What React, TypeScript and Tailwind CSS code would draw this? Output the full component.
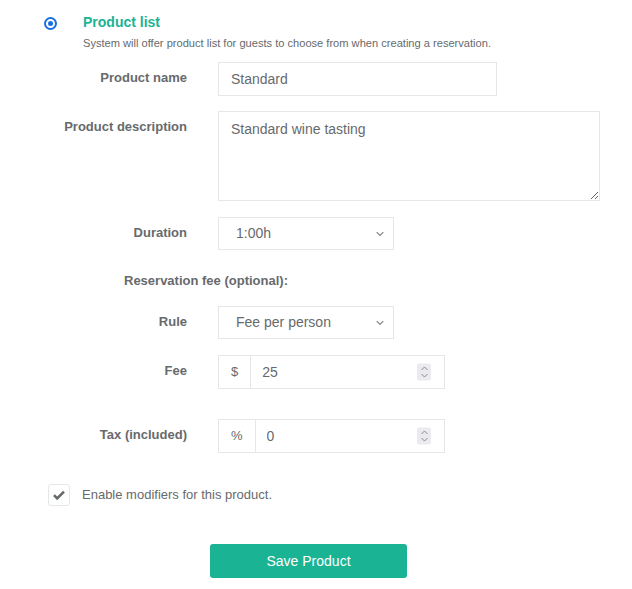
import React from 'react';

const labelCls = "w-[187px] shrink-0 text-right text-[13px] font-bold leading-4 pt-[8px] text-[#676a6c]";
const boxCls = "border border-[#e5e6e7] bg-white text-[14px] text-[#676a6c] outline-none";

function Chevron() {
    return (
        <svg width="8" height="5" viewBox="0 0 8 5" className="pointer-events-none absolute right-[10px] top-1/2 -translate-y-1/2">
            <path d="M0.7 0.7l3.3 3.3 3.3-3.3" fill="none" stroke="#808080" strokeWidth="1.2" />
        </svg>
    );
}

function Spinner() {
    return (
        <div className="pointer-events-none absolute right-[13px] top-1/2 flex h-[17px] w-[14px] -translate-y-1/2 flex-col items-center justify-center gap-[3px] rounded-[2px] bg-[#ebebef]">
            <svg width="7" height="4" viewBox="0 0 7 4">
                <path d="M0.5 3.5l3-3 3 3" fill="none" stroke="#8a8a8e" strokeWidth="1" />
            </svg>
            <svg width="7" height="4" viewBox="0 0 7 4">
                <path d="M0.5 0.5l3 3 3-3" fill="none" stroke="#8a8a8e" strokeWidth="1" />
            </svg>
        </div>
    );
}

function Select({ value, options }: { value: string; options: string[] }) {
    return (
        <div className="relative ml-[31px] w-[176px]">
            <select
                defaultValue={value}
                className={`${boxCls} h-[33px] w-full appearance-none pl-[17px] pr-6`}
            >
                {options.map((o) => (
                    <option key={o}>{o}</option>
                ))}
            </select>
            <Chevron />
        </div>
    );
}

function AddonInput({ addon, value }: { addon: string; value: string }) {
    return (
        <div className="relative ml-[31px] flex h-[34px] w-[227px] border border-[#e5e6e7] bg-white">
            <span className="flex items-center border-r border-[#e5e6e7] px-[12px] text-[13px] text-[#676a6c]">{addon}</span>
            <input
                type="text"
                defaultValue={value}
                className="min-w-0 flex-1 pl-[11px] text-[14px] text-[#676a6c] outline-none"
            />
            <Spinner />
        </div>
    );
}

export default function App() {
    return (
        <div className="min-h-[589px] w-[632px] bg-white pt-[14px] font-['Liberation_Sans',Arial,sans-serif] text-[#676a6c]">
            {/* 라디오 + 제목 */}
            <div className="flex items-start">
                <div className="ml-[44px] mt-[3px] flex h-[13px] w-[13px] items-center justify-center rounded-full border-[2px] border-[#1a6fe0]">
                    <div className="h-[5px] w-[5px] rounded-full bg-[#1a6fe0]" />
                </div>
                <div className="ml-[26px]">
                    <div className="text-[14px] font-bold leading-4 text-[#1ab394]">Product list</div>
                    <div className="mt-[6px] text-[11.1px] leading-[14px] text-[#676a6c]">
                        System will offer product list for guests to choose from when creating a reservation.
                    </div>
                </div>
            </div>

            {/* 폼 필드 */}
            <div className="mt-[12px] flex">
                <label className={labelCls}>Product name</label>
                <input
                    type="text"
                    defaultValue="Standard"
                    className={`${boxCls} ml-[31px] h-[34px] w-[279px] px-[12px]`}
                />
            </div>

            <div className="mt-[15px] flex">
                <label className={labelCls}>Product description</label>
                <textarea
                    defaultValue="Standard wine tasting"
                    className={`${boxCls} ml-[31px] h-[90px] w-[382px] px-[12px] pt-[7px] leading-5`}
                />
            </div>

            <div className="mt-[16px] flex">
                <label className={labelCls}>Duration</label>
                <Select value="1:00h" options={['0:30h', '1:00h', '1:30h', '2:00h']} />
            </div>

            <div className="ml-[124px] mt-[23px] text-[13px] font-bold leading-4">Reservation fee (optional):</div>

            <div className="mt-[17px] flex">
                <label className={labelCls}>Rule</label>
                <Select value="Fee per person" options={['Fee per person', 'Fee per reservation']} />
            </div>

            <div className="mt-[16px] flex">
                <label className={labelCls}>Fee</label>
                <AddonInput addon="$" value="25" />
            </div>

            <div className="mt-[30px] flex">
                <label className={labelCls}>Tax (included)</label>
                <AddonInput addon="%" value="0" />
            </div>

            {/* 체크박스 */}
            <div className="ml-[48px] mt-[31px] flex items-center">
                <div className="flex h-[22px] w-[22px] items-center justify-center rounded-[3px] border border-[#e5e6e7] bg-white">
                    <svg width="12" height="10" viewBox="0 0 12 10">
                        <path d="M1 5.2l3.2 3.2L11 1.6" fill="none" stroke="#676a6c" strokeWidth="2.6" />
                    </svg>
                </div>
                <span className="ml-[12px] text-[13px]">Enable modifiers for this product.</span>
            </div>

            {/* 저장 버튼 */}
            <button className="ml-[210px] mt-[38px] h-[34px] w-[197px] rounded-[3px] bg-[#1ab394] text-[14px] text-white">
                Save Product
            </button>
        </div>
    );
}
